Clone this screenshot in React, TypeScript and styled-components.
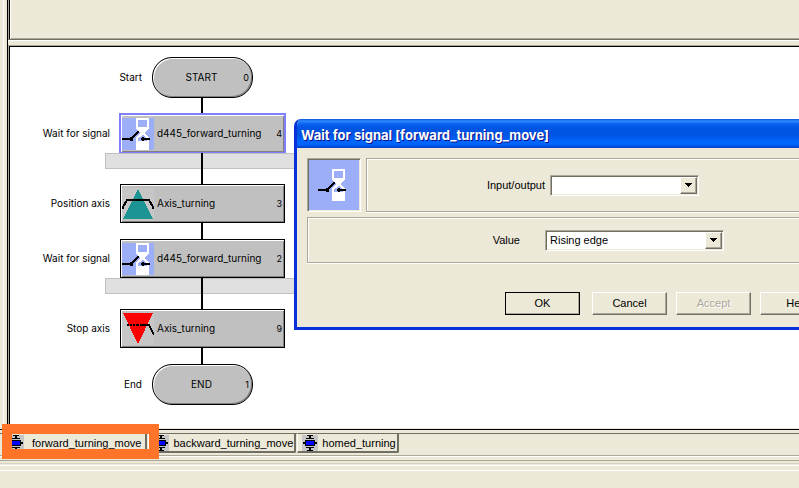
import React from "react";
import styled, { createGlobalStyle, css } from "styled-components";

const FACE = "#ece9d8";
const SHADOW = "#aca899";
const DARK = "#716f64";

const GlobalStyle = createGlobalStyle`
  *, *::before, *::after { box-sizing: border-box; }
  html, body, #root { height: 100%; }
  body {
    margin: 0;
    overflow: hidden;
    background: ${FACE};
    color: #000;
    font: 11px/13px "Liberation Sans", Arial, sans-serif;
  }
`;

const Page = styled.div`
  display: flex;
  flex-direction: column;
  height: 100%;
`;

const Workspace = styled.div`
  display: flex;
  flex: 1;
  min-height: 0;
`;

const LeftRail = styled.div`
  flex: none;
  width: 8px;
  border-right: 1px solid #000;
  background: linear-gradient(to right, ${FACE} 3px, #fff 3px, #fff 4px, ${FACE} 4px);
`;

const Panes = styled.div`
  display: flex;
  flex: 1;
  flex-direction: column;
  min-width: 0;
`;

const DeclarationPane = styled.div`
  flex: none;
  height: 40px;
  border-left: 1px solid ${SHADOW};
  border-bottom: 1px solid ${DARK};
  box-shadow: inset 1px 0 0 #000, inset 2px 0 0 #fff, inset 0 -1px 0 ${SHADOW};
`;

const Splitter = styled.div`
  flex: none;
  height: 5px;
  border-top: 1px solid #fff;
`;

const Canvas = styled.main`
  position: relative;
  flex: 1;
  min-height: 0;
  overflow: hidden;
  padding: 10px 0 0;
  background: #fff;
  border-left: 1px solid ${SHADOW};
  border-top: 1px solid ${SHADOW};
  border-bottom: 1px solid ${FACE};
  box-shadow: inset 1px 1px 0 #000;
  font: 10px/13px Inter, "DejaVu Sans", sans-serif;
`;

const Chart = styled.div`
  display: flex;
  flex-direction: column;
  padding: 1px 0 0 1px;
`;

const StepRow = styled.div<{ $terminal?: boolean }>`
  display: grid;
  grid-template-columns: ${(p) => (p.$terminal ? "133px 101px" : "101px 165px")};
  column-gap: 9px;
  align-items: center;
`;

const StepLabel = styled.span`
  padding-right: 1px;
  text-align: right;
  white-space: nowrap;
`;

const Terminal = styled.div`
  display: grid;
  grid-template-columns: 1fr auto 1fr;
  align-items: center;
  height: 41px;
  padding: 0 3px 0 1px;
  border: 1px solid #000;
  border-radius: 20px;
  background: #c0c0c0;
  box-shadow: inset 1px 1px 0 #fff, inset -1px -1px 0 #808080;
`;

const TerminalName = styled.span`
  grid-column: 2;
`;

const StepNumber = styled.span`
  justify-self: end;
  font-size: 9px;
`;

const StepBlock = styled.div<{ $selected?: boolean }>`
  display: grid;
  grid-template-columns: 32px 1fr auto;
  column-gap: 3px;
  align-items: center;
  height: 39px;
  padding: 0 2px 0 1px;
  border: 1px solid ${(p) => (p.$selected ? "#8080ff" : "#000")};
  background: #c0c0c0;
  outline: ${(p) => (p.$selected ? "1px solid #8080ff" : "none")};
  box-shadow: inset 1px 1px 0 #fff, inset -1px -1px 0 #808080;
  white-space: nowrap;
`;

const Connector = styled.div<{ $length: number }>`
  width: 2px;
  height: ${(p) => p.$length}px;
  margin-left: 191px;
  background: #000;
`;

const Band = styled.div`
  width: 260px;
  height: 16px;
  margin-left: 95px;
  padding-left: 96px;
  background: #e0e0e0;
  box-shadow: inset 0 0 0 1px #c0c0c0;

  &::before {
    content: "";
    display: block;
    width: 2px;
    height: 100%;
    background: #000;
  }
`;

const Dialog = styled.section`
  position: absolute;
  top: 73px;
  left: 285px;
  width: 560px;
  border: solid #0831d9;
  border-width: 0 3px 3px;
  border-radius: 7px 7px 0 0;
  background: ${FACE};
  overflow: hidden;
  font: 11px/13px "Liberation Sans", Arial, sans-serif;
`;

const DialogTitle = styled.h1`
  height: 29px;
  margin: 0 -3px;
  padding: 1px 7px 0;
  background: linear-gradient(
    #0750dc 0, #2d8bff 2px, #0b62f0 5px, #0055e3 9px, #0054e3 16px,
    #0066ff 23px, #0063f8 26px, #0046d4 28px, #003cc4 29px
  );
  color: #fff;
  font: bold 13px/30px Inter, "DejaVu Sans", sans-serif;
  text-shadow: 1px 1px 0 #0f1089;
  white-space: nowrap;
`;

const DialogBody = styled.form`
  display: flex;
  flex-direction: column;
  padding: 10px 10px 12px;
`;

const InputRow = styled.div`
  display: grid;
  grid-template-columns: 54px 1fr;
  column-gap: 5px;
  margin-bottom: 5px;
`;

const IconWell = styled.div`
  display: grid;
  place-items: center;
  height: 54px;
  border: 1px solid;
  border-color: ${SHADOW} #fff #fff ${SHADOW};
  background: #9caef7;
  box-shadow: inset 1px 1px 0 ${DARK}, inset -1px -1px 0 ${FACE};
`;

const FieldGroup = styled.div<{ $labelEnd: number; $tall?: boolean }>`
  display: grid;
  grid-template-columns: ${(p) => p.$labelEnd}px auto;
  justify-content: start;
  align-items: center;
  height: ${(p) => (p.$tall ? 54 : 46)}px;
  border: 1px solid ${SHADOW};
  box-shadow: inset 1px 1px 0 #fff, 0 1px 0 #fff;
`;

const FieldLabel = styled.label<{ $gap: number }>`
  padding-right: ${(p) => p.$gap}px;
  text-align: right;
`;

const Combo = styled.div<{ $width: number }>`
  display: grid;
  grid-template-columns: 1fr 17px;
  width: ${(p) => p.$width}px;
  height: 21px;
  border: 1px solid;
  border-color: ${SHADOW} #fff #fff ${SHADOW};
  background: #fff;
  box-shadow: inset 1px 1px 0 ${DARK}, inset -1px -1px 0 ${FACE};
  padding: 1px;
`;

const ComboSelect = styled.select`
  grid-area: 1 / 1 / 2 / 3;
  width: 100%;
  margin: 0;
  padding: 0 18px 0 3px;
  appearance: none;
  border: 0;
  border-radius: 0;
  outline: 0;
  background: transparent;
  color: #000;
  font: 11px/15px "Liberation Sans", Arial, sans-serif;
`;

const raised = css`
  border: 1px solid;
  border-color: #fff ${DARK} ${DARK} #fff;
  background: ${FACE};
  box-shadow: inset -1px -1px 0 ${SHADOW};
`;

const ComboArrow = styled.span`
  ${raised}
  grid-area: 1 / 2 / 2 / 3;
  display: grid;
  place-items: center;
  pointer-events: none;
`;

const ButtonRow = styled.div`
  display: flex;
  gap: 9px;
  margin: 29px 0 0 198px;
`;

const PushButton = styled.button<{ $primary?: boolean }>`
  ${raised}
  flex: none;
  width: 75px;
  height: 23px;
  margin-right: ${(p) => (p.$primary ? 3 : 0)}px;
  padding: 0;
  border-radius: 0;
  outline: ${(p) => (p.$primary ? "1px solid #000" : "none")};
  outline-offset: -1px;
  color: #000;
  font: 11px/13px "Liberation Sans", Arial, sans-serif;

  &:disabled {
    color: ${SHADOW};
    text-shadow: 1px 1px 0 #fff;
  }
`;

const Tabs = styled.nav`
  position: relative;
  display: flex;
  flex: none;
  height: 27px;
  padding: 0 0 3px 3px;
  border-top: 1px solid #000;
  border-bottom: 1px solid ${SHADOW};
  background: linear-gradient(${FACE} 3px, ${DARK} 3px, ${DARK} 4px, ${FACE} 4px);
`;

const Tab = styled.button<{ $active?: boolean }>`
  display: flex;
  align-items: center;
  gap: ${(p) => (p.$active ? 8 : 4)}px;
  flex: none;
  height: 20px;
  margin: 3px 1px 0 0;
  padding: 1px ${(p) => (p.$active ? 4 : 1)}px 0 4px;
  border: solid;
  border-width: 1px 2px 2px 1px;
  border-color: ${(p) => (p.$active ? FACE : DARK)} ${DARK} ${DARK} #fff;
  border-radius: 0 0 2px 0;
  background: ${FACE};
  color: #000;
  font: 11px/13px "Liberation Sans", Arial, sans-serif;
  white-space: nowrap;
`;

const Highlight = styled.div`
  position: absolute;
  top: -6px;
  left: 2px;
  width: 157px;
  height: 35px;
  border: 10px solid #ff7428;
  pointer-events: none;
`;

const StatusArea = styled.footer`
  flex: none;
  height: 32px;
  background: linear-gradient(
    #fff 1px, ${FACE} 1px, ${FACE} 4px, ${SHADOW} 4px, ${SHADOW} 5px,
    ${FACE} 5px, ${FACE} 7px, #d6d2c2 7px, #d6d2c2 8px, ${FACE} 8px, ${FACE} 9px,
    #fff 9px, #fff 10px, ${FACE} 10px, ${FACE} 14px, #fff 14px, #fff 15px, ${FACE} 15px
  );
`;

const WaitIcon = () => (
  <svg width="32" height="32" viewBox="0 0 32 32" shapeRendering="crispEdges" aria-hidden="true">
    <rect width="32" height="32" fill="#9caef7" />
    <path d="M14 0h13v11h-1v1h-1v1h-1v1h-1v2h1v1h1v1h1v1h1v13H14V19h1v-1h1v-1h1v-1h1v-2h-1v-1h-1v-1h-1v-1h-1z" fill="#fff" />
    <path d="M16 2h9v7H16zM20 17h2v1h1v1h1v1h1v3h-9v-3h1v-1h2v-1h1z" fill="#9caef7" />
    <path d="M0 20h10v2H0zM8 19h3v4H8zM10 18h2v2h-2zM11 17h2v2h-2zM12 16h2v2h-2zM13 15h2v2h-2zM14 14h2v2h-2zM15 13h2v2h-2zM19 20h1v-1h2v1h6v2h-6v1h-2v-1h-1z" fill="#000" />
  </svg>
);

const PositionIcon = () => (
  <svg width="32" height="32" viewBox="0 0 32 32" shapeRendering="crispEdges" aria-hidden="true">
    <rect width="32" height="32" fill="#c6c6c6" />
    <path d="M16 1L31 31H1z" fill="#1c9494" />
    <path d="M1 21V19L5 12H27L31 19V21" fill="none" stroke="#000" strokeWidth="2" />
  </svg>
);

const StopIcon = () => (
  <svg width="32" height="32" viewBox="0 0 32 32" shapeRendering="crispEdges" aria-hidden="true">
    <rect width="32" height="32" fill="#c6c6c6" />
    <path d="M1 0H31L16 31z" fill="#f00" />
    <path d="M5 12h2m1 0h2m1 0h2m1 0h3m1 0h9l5 10" fill="none" stroke="#000" strokeWidth="2" />
  </svg>
);

const ProgramIcon = () => (
  <svg width="16" height="16" viewBox="0 0 16 16" shapeRendering="crispEdges" aria-hidden="true">
    <rect width="16" height="16" fill="#c6c6c6" />
    <path d="M5 0h6v1H5zM7 1h2v2H7zM4 3h8v1H4zM1 7h14v2H1zM3 5h10v6H3zM4 12h8v1H4zM7 13h2v2H7zM5 15h6v1H5z" fill="#000" />
    <path d="M4 6h8v4H4z" fill="#00f" />
  </svg>
);

const Arrow = () => (
  <svg width="7" height="4" viewBox="0 0 7 4" shapeRendering="crispEdges" aria-hidden="true">
    <path d="M0 0h7v1H6v1H5v1H4v1H3V3H2V2H1V1H0z" />
  </svg>
);

interface StepProps {
  label: string;
  name: string;
  number: string;
  icon: React.ReactNode;
  selected?: boolean;
}

const Step = ({ label, name, number, icon, selected }: StepProps) => (
  <StepRow>
    <StepLabel>{label}</StepLabel>
    <StepBlock $selected={selected}>
      {icon}
      <span>{name}</span>
      <StepNumber>{number}</StepNumber>
    </StepBlock>
  </StepRow>
);

const Terminator = ({ label, name, number }: Omit<StepProps, "icon">) => (
  <StepRow $terminal>
    <StepLabel>{label}</StepLabel>
    <Terminal>
      <TerminalName>{name}</TerminalName>
      <StepNumber>{number}</StepNumber>
    </Terminal>
  </StepRow>
);

const tabs = ["forward_turning_move", "backward_turning_move", "homed_turning"];

export default function App() {
  return (
    <Page>
      <GlobalStyle />
      <Workspace>
        <LeftRail />
        <Panes>
          <DeclarationPane />
          <Splitter />
          <Canvas>
            <Chart>
              <Terminator label="Start" name="START" number="0" />
              <Connector $length={16} />
              <Step label="Wait for signal" name="d445_forward_turning" number="4" icon={<WaitIcon />} selected />
              <Band />
              <Connector $length={15} />
              <Step label="Position axis" name="Axis_turning" number="3" icon={<PositionIcon />} />
              <Connector $length={16} />
              <Step label="Wait for signal" name="d445_forward_turning" number="2" icon={<WaitIcon />} />
              <Band />
              <Connector $length={15} />
              <Step label="Stop axis" name="Axis_turning" number="9" icon={<StopIcon />} />
              <Connector $length={16} />
              <Terminator label="End" name="END" number="1" />
            </Chart>
            <Dialog role="dialog" aria-labelledby="dialog-title">
              <DialogTitle id="dialog-title">Wait for signal [forward_turning_move]</DialogTitle>
              <DialogBody onSubmit={(e) => e.preventDefault()}>
                <InputRow>
                  <IconWell>
                    <WaitIcon />
                  </IconWell>
                  <FieldGroup $labelEnd={183} $tall>
                    <FieldLabel htmlFor="io" $gap={5}>Input/output</FieldLabel>
                    <Combo $width={149}>
                      <ComboSelect id="io" defaultValue="">
                        <option value="" />
                      </ComboSelect>
                      <ComboArrow><Arrow /></ComboArrow>
                    </Combo>
                  </FieldGroup>
                </InputRow>
                <FieldGroup $labelEnd={237}>
                  <FieldLabel htmlFor="value" $gap={25}>Value</FieldLabel>
                  <Combo $width={179}>
                    <ComboSelect id="value" defaultValue="rising">
                      <option value="rising">Rising edge</option>
                    </ComboSelect>
                    <ComboArrow><Arrow /></ComboArrow>
                  </Combo>
                </FieldGroup>
                <ButtonRow>
                  <PushButton type="submit" $primary>OK</PushButton>
                  <PushButton type="button">Cancel</PushButton>
                  <PushButton type="button" disabled>Accept</PushButton>
                  <PushButton type="button">Help</PushButton>
                </ButtonRow>
              </DialogBody>
            </Dialog>
          </Canvas>
        </Panes>
      </Workspace>
      <Tabs>
        {tabs.map((name, index) => (
          <Tab key={name} type="button" $active={index === 0}>
            <ProgramIcon />
            {name}
          </Tab>
        ))}
        <Highlight />
      </Tabs>
      <StatusArea />
    </Page>
  );
}
